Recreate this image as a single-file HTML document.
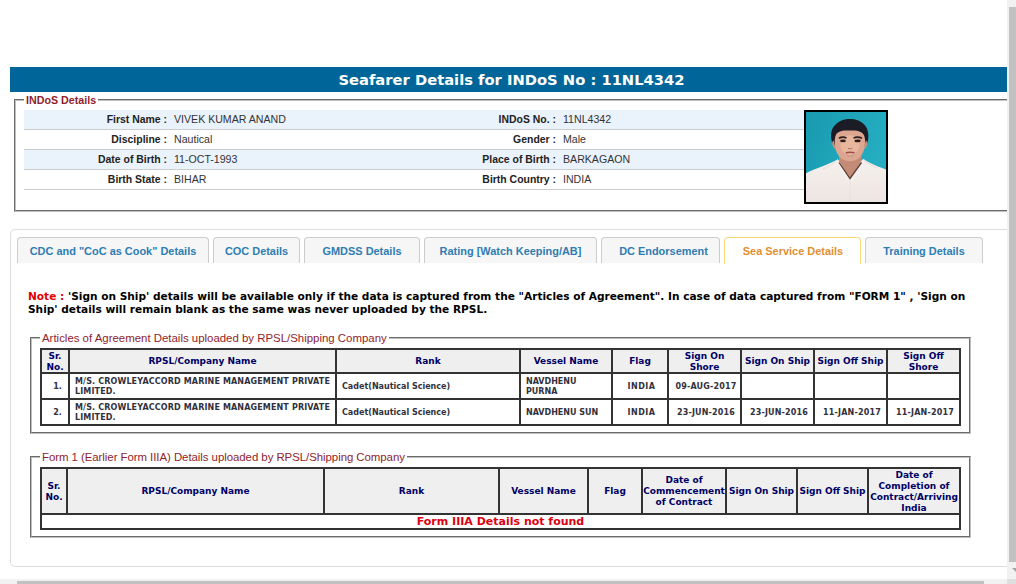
<!DOCTYPE html>
<html>
<head>
<meta charset="utf-8">
<title>Seafarer Details</title>
<style>
html,body{margin:0;padding:0;}
body{width:1016px;height:584px;overflow:hidden;background:#fff;position:relative;font-family:"Liberation Sans",Arial,sans-serif;font-size:12px;color:#222;}
.abs{position:absolute;}
#title{left:10px;top:67px;width:1003px;height:24.5px;background:#006699;color:#fff;font-family:"DejaVu Sans",Verdana,sans-serif;font-weight:bold;font-size:14.72px;line-height:25px;text-align:center;white-space:nowrap;}
fieldset{margin:0;padding:0;border:2px groove #c0c0c0;box-sizing:border-box;min-width:0;}
legend{padding:0 2px;margin:0;color:#8f1d2c;font-size:11.43px;line-height:14px;white-space:nowrap;}
#fs1{left:14px;top:93px;width:1000px;height:119px;}
#fs1 legend{margin-left:8px;font-weight:bold;font-size:10.7px;}
#info{left:24px;top:110px;width:780px;border-collapse:separate;border-spacing:0;table-layout:fixed;}
#info td{height:19px;padding:0;border-bottom:1px solid #ccc;font-size:10.6px;line-height:19px;white-space:nowrap;overflow:hidden;}
#info tr.alt td{background:#eaf2fb;}
#info td.l{text-align:right;font-weight:bold;color:#222;padding-right:7px;font-size:10.45px;}
#info td.v{color:#333;}
#photo{left:804px;top:110px;width:80px;height:90px;border:2px solid #000;background:#1fa6b9;overflow:hidden;}
#tabs{left:10px;top:229px;width:1010px;height:338px;border:1px solid #ddd;border-radius:5px;box-sizing:border-box;}
.tab{position:absolute;top:237px;height:26px;box-sizing:border-box;border:1px solid #ccc;border-bottom:none;border-radius:4px 4px 0 0;background:#f6f6f6;color:#2e7db2;font-weight:bold;font-size:10.95px;line-height:27px;text-align:center;white-space:nowrap;}
.tab.act{background:#fff;border-color:#fad978;color:#e28f31;height:27px;}
#note{left:28px;top:290px;width:975px;font-family:"DejaVu Sans",Verdana,sans-serif;font-weight:bold;font-size:10.59px;line-height:13px;color:#000;}
#note b{color:#e00000;}
.fs2{left:30px;width:941px;}
.fs2 legend{margin-left:8px;}
table.g{position:absolute;left:40px;width:921px;border-collapse:separate;border-spacing:0;border:1px solid #333;table-layout:fixed;font-family:"DejaVu Sans",Verdana,sans-serif;font-weight:bold;}
table.g th,table.g td{border:1px solid #333;padding:0;overflow:hidden;}
table.g th{background:#efefef;color:#000066;font-size:9px;line-height:11px;text-align:center;}
table.g td{color:#31313d;font-size:8px;line-height:10px;height:22px;text-align:center;padding:2px 0 0 3px;}
table.g th i{font-style:normal;position:relative;top:1px;display:block;}
table.g td.m{letter-spacing:0.14px;}
table.g td.d{letter-spacing:0.17px;}
table.g td.f{letter-spacing:0.5px;}
table.g td.n{padding-left:5px;}
table.g td.t{text-align:left;padding-left:5px;}
#vsb{left:1007px;top:0;width:9px;height:584px;background:#f1f1f1;}
#vth{left:1009px;top:7px;width:7px;height:555px;background:#c1c1c1;}
#hsb{left:0;top:579px;width:1007px;height:5px;background:#f1f1f1;}
#cnr{left:1007px;top:579px;width:9px;height:5px;background:#dedede;}
#arr{left:1011.5px;top:568px;width:0;height:0;border-left:5px solid transparent;border-right:5px solid transparent;border-top:5px solid #a3a3a3;}
#hth{left:17px;top:581px;width:967px;height:3px;background:#c1c1c1;}
</style>
</head>
<body>
<div id="title" class="abs">Seafarer Details for INDoS No : 11NL4342</div>

<fieldset id="fs1" class="abs"><legend>INDoS Details</legend></fieldset>
<table id="info" class="abs">
<colgroup><col style="width:150px"><col style="width:239px"><col style="width:150px"><col style="width:241px"></colgroup>
<tr class="alt"><td class="l">First Name :</td><td class="v">VIVEK KUMAR ANAND</td><td class="l">INDoS No. :</td><td class="v">11NL4342</td></tr>
<tr><td class="l">Discipline :</td><td class="v">Nautical</td><td class="l">Gender :</td><td class="v">Male</td></tr>
<tr class="alt"><td class="l">Date of Birth :</td><td class="v">11-OCT-1993</td><td class="l">Place of Birth :</td><td class="v">BARKAGAON</td></tr>
<tr><td class="l">Birth State :</td><td class="v">BIHAR</td><td class="l">Birth Country :</td><td class="v">INDIA</td></tr>
</table>
<div id="photo" class="abs"><svg width="80" height="90" viewBox="0 0 80 90" style="display:block">
<defs>
<filter id="pb" x="-10%" y="-10%" width="120%" height="120%"><feGaussianBlur stdDeviation="0.75"/></filter>
<filter id="pb2" x="-10%" y="-10%" width="120%" height="120%"><feGaussianBlur stdDeviation="0.5"/></filter>
<linearGradient id="pbg" x1="0" y1="0" x2="1" y2="0.4"><stop offset="0" stop-color="#1899af"/><stop offset="0.5" stop-color="#1fa5b9"/><stop offset="1" stop-color="#25adc1"/></linearGradient>
<linearGradient id="psh" x1="0" y1="0" x2="0" y2="1"><stop offset="0" stop-color="#f6f1ee"/><stop offset="1" stop-color="#ece4e0"/></linearGradient>
</defs>
<rect width="80" height="90" fill="url(#pbg)"/>
<g filter="url(#pb)">
<path d="M-3 63 C6 57 20 54 31.5 47.5 L38 52 L44 60 L50 52 L57.5 47 C63 51 73 55 83 58.5 L83 93 L-3 93 Z" fill="url(#psh)"/>
<path d="M33 42 L33 51 L44 67 L55.5 51 L55.5 42 Z" fill="#c48c77"/>
<path d="M31.5 47.5 L33.5 50 L44 67 L55 50 L57.5 47 L60 50 L45.5 72 L44 90 L42.5 72 L29 50 Z" fill="#f4efec"/>
<path d="M33 50.5 L44 66.5 L55.5 50.5" fill="none" stroke="#5a4036" stroke-width="1.3"/>
<path d="M25.3 27 C23.5 14 33 7 44 7 C55 7 64 14 62.2 27 C61.8 30 60.8 32.5 59.5 34 L28.5 34 C27 32.5 25.8 30 25.3 27 Z" fill="#1e1c26"/>
<path d="M27.3 29.5 C26.5 30 26.8 34.5 28.8 36 Z M60.2 29.5 C61 30 60.7 34.5 58.7 36 Z" fill="#c98f7a" stroke="#c98f7a" stroke-width="1.2"/>
<path d="M28.8 27.5 C28.3 36 30.5 42.5 35.5 46.5 C40 50.2 48 50.2 52.5 46.5 C57 42.5 59.5 36 59 27.5 C58.5 23.5 57.5 21.8 55.5 20.6 C52 18.3 48 18.6 44 18.6 C39.5 18.6 35.5 18.3 32 20.6 C30 21.8 29.3 23.5 28.8 27.5 Z" fill="#dda690"/>
<ellipse cx="44" cy="33" rx="9.5" ry="10" fill="#ebb9a2" opacity="0.75"/>
</g>
<g filter="url(#pb2)">
<path d="M33 26.3 C35 25 38.5 25 40.5 26 M47.5 26 C50 25 53.5 25 56 26.3" stroke="#2b1e1e" stroke-width="1.7" fill="none"/>
<ellipse cx="37" cy="28.9" rx="2.9" ry="1.3" fill="#2a1c1c"/>
<ellipse cx="51.6" cy="28.9" rx="3.1" ry="1.3" fill="#2a1c1c"/>
<path d="M42 36.3 C43.3 37 45 37 46.3 36.3" stroke="#a86a58" stroke-width="1" fill="none"/>
<path d="M39.8 40.8 C42 40.2 46.3 40.2 48.5 40.8" stroke="#9a4f4a" stroke-width="1.5" fill="none"/>
<path d="M41 43.5 C43 44.3 45.5 44.3 47.5 43.5" stroke="#c48f7a" stroke-width="0.8" fill="none"/>
<path d="M31.5 48 C27 52 22 55 17 57 M57.5 47.5 C61 51 66 54 70 55.5 M44 68 L44 90" stroke="#e4d9d4" stroke-width="0.9" fill="none"/>
</g>
</svg></div>

<div id="tabs" class="abs"></div>
<div class="tab" style="left:17px;width:192px;">CDC and "CoC as Cook" Details</div>
<div class="tab" style="left:213px;width:87px;">COC Details</div>
<div class="tab" style="left:304px;width:116px;">GMDSS Details</div>
<div class="tab" style="left:424px;width:173px;">Rating [Watch Keeping/AB]</div>
<div class="tab" style="left:601px;width:119px;padding-left:6px;">DC Endorsement</div>
<div class="tab act" style="left:724px;width:137px;padding-left:1px;">Sea Service Details</div>
<div class="tab" style="left:865px;width:118px;">Training Details</div>

<div id="note" class="abs"><b>Note :</b> 'Sign on Ship' details will be available only if the data is captured from the "Articles of Agreement". In case of data captured from "FORM 1" , 'Sign on<br>Ship' details will remain blank as the same was never uploaded by the RPSL.</div>

<fieldset class="abs fs2" style="top:331px;height:103px;"><legend>Articles of Agreement Details uploaded by RPSL/Shipping Company</legend></fieldset>
<table class="g" style="top:348px;">
<colgroup><col style="width:28px"><col style="width:267px"><col style="width:184px"><col style="width:92px"><col style="width:56px"><col style="width:73px"><col style="width:73px"><col style="width:73px"><col style="width:73px"></colgroup>
<tr style="height:24px"><th><i>Sr.<br>No.</i></th><th>RPSL/Company Name</th><th>Rank</th><th>Vessel Name</th><th>Flag</th><th><i>Sign On<br>Shore</i></th><th>Sign On Ship</th><th>Sign Off Ship</th><th><i>Sign Off<br>Shore</i></th></tr>
<tr><td class="n">1.</td><td class="t m">M/S. CROWLEYACCORD MARINE MANAGEMENT PRIVATE<br>LIMITED.</td><td class="t">Cadet(Nautical Science)</td><td class="t">NAVDHENU<br>PURNA</td><td class="f">INDIA</td><td class="d">09-AUG-2017</td><td></td><td></td><td></td></tr>
<tr><td class="n">2.</td><td class="t m">M/S. CROWLEYACCORD MARINE MANAGEMENT PRIVATE<br>LIMITED.</td><td class="t">Cadet(Nautical Science)</td><td class="t">NAVDHENU SUN</td><td class="f">INDIA</td><td class="d">23-JUN-2016</td><td class="d">23-JUN-2016</td><td class="d">11-JAN-2017</td><td class="d">11-JAN-2017</td></tr>
</table>

<fieldset class="abs fs2" style="top:450px;height:88px;"><legend style="letter-spacing:-0.05px">Form 1 (Earlier Form IIIA) Details uploaded by RPSL/Shipping Company</legend></fieldset>
<table class="g" style="top:467px;">
<colgroup><col style="width:26px"><col style="width:257px"><col style="width:175px"><col style="width:89px"><col style="width:54px"><col style="width:84px"><col style="width:71px"><col style="width:71px"><col style="width:92px"></colgroup>
<tr style="height:46px"><th><i>Sr.<br>No.</i></th><th>RPSL/Company Name</th><th>Rank</th><th>Vessel Name</th><th>Flag</th><th>Date of<br>Commencement<br>of Contract</th><th>Sign On Ship</th><th>Sign Off Ship</th><th><i>Date of<br>Completion of<br>Contract/Arriving<br>India</i></th></tr>
<tr><td colspan="9" style="height:12px;padding:1px 0 0 0;font-size:11px;line-height:12px;color:#dc0010;">Form IIIA Details not found</td></tr>
</table>

<div id="vsb" class="abs"></div><div id="vth" class="abs"></div>
<div id="hsb" class="abs"></div><div id="hth" class="abs"></div><div id="cnr" class="abs"></div><div id="arr" class="abs"></div>
</body>
</html>
